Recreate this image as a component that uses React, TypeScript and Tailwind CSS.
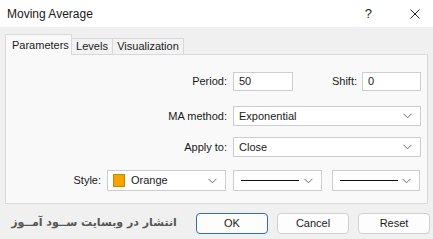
import React from 'react';

const font = { fontFamily: '"Liberation Sans", Arial, sans-serif' };

function Chevron() {
  return (
    <svg width="9" height="6" viewBox="0 0 9 6" className="shrink-0">
      <path d="M0.5 0.8 L4.5 4.8 L8.5 0.8" fill="none" stroke="#6b6b6b" strokeWidth="1" />
    </svg>
  );
}

function TextBox({ value, className = '' }: { value: string; className?: string }) {
  return (
    <div className={`h-[19px] bg-white border border-[#cdcdcd] flex items-center pl-[5px] text-[11px] text-[#1a1a1a] ${className}`}>
      {value}
    </div>
  );
}

function Select({ children, className = '' }: { children: React.ReactNode; className?: string }) {
  return (
    <div className={`bg-white border border-[#cdcdcd] flex items-center pl-[5px] pr-[8px] text-[11px] text-[#1a1a1a] ${className}`}>
      <div className="flex-1 flex items-center">{children}</div>
      <Chevron />
    </div>
  );
}

function Line() {
  return <div className="h-px bg-[#111] w-[58px]" />;
}

function Button({ label, primary = false }: { label: string; primary?: boolean }) {
  return (
    <div
      className={`w-[72px] h-[21px] rounded-[4px] flex items-center justify-center text-[11px] text-[#1a1a1a] ${
        primary ? 'border border-[#2a6fc0] bg-[#fdfdfd]' : 'border border-[#d0d0d0] bg-[#fdfdfd]'
      }`}
    >
      {label}
    </div>
  );
}

export default function App() {
  return (
    <div className="w-[433px] h-[239px] bg-[#f0f0f0] overflow-hidden" style={font}>
      {/* title bar */}
      <div className="h-[27px] bg-white flex items-center pl-[7px] text-[12px] text-[#1a1a1a]">
        <span>Moving Average</span>
        <span className="ml-auto mr-[38px] text-[13px] text-[#222]">?</span>
        <svg width="10" height="10" viewBox="0 0 10 10" className="mr-[13px]">
          <path d="M0.5 0.5 L9.5 9.5 M9.5 0.5 L0.5 9.5" stroke="#222" strokeWidth="1" />
        </svg>
      </div>

      {/* tabs */}
      <div className="mt-[7px] pl-[5px] h-[20px] flex items-end text-[11px] text-[#1a1a1a]">
        <div className="relative z-10 -mb-px h-[21px] w-[67px] bg-[#f9f9f9] border border-b-0 border-[#d9d9d9] flex items-center pl-[6px]">
          Parameters
        </div>
        <div className="h-[16px] w-[41px] bg-[#f3f3f3] border border-l-0 border-b-0 border-[#d9d9d9] flex items-center justify-center">
          Levels
        </div>
        <div className="h-[16px] w-[71px] bg-[#f3f3f3] border border-l-0 border-b-0 border-[#d9d9d9] flex items-center justify-center">
          Visualization
        </div>
      </div>

      {/* panel */}
      <div className="ml-[5px] w-[423px] h-[150px] border border-[#d9d9d9] bg-[#f9f9f9] text-[11px] text-[#1a1a1a]">
        <div className="mt-[17px] flex items-center h-[19px]">
          <div className="w-[221px] text-right">Period:</div>
          <TextBox value="50" className="ml-[6px] w-[60px]" />
          <div className="w-[64px] text-right">Shift:</div>
          <TextBox value="0" className="ml-[5px] w-[59px]" />
        </div>
        <div className="mt-[15px] flex items-center h-[20px]">
          <div className="w-[221px] text-right">MA method:</div>
          <Select className="ml-[6px] w-[188px] h-[20px]">Exponential</Select>
        </div>
        <div className="mt-[11px] flex items-center h-[20px]">
          <div className="w-[221px] text-right">Apply to:</div>
          <Select className="ml-[6px] w-[188px] h-[20px]">Close</Select>
        </div>
        <div className="mt-[13px] flex items-center h-[21px]">
          <div className="w-[95px] text-right">Style:</div>
          <Select className="ml-[6px] w-[119px] h-[21px] pl-[4px]">
            <span className="w-[12px] h-[13px] bg-[#f5a300] border border-[#c98600] mr-[6px]" />
            Orange
          </Select>
          <Select className="ml-[7px] w-[89px] h-[21px] pl-[7px]">
            <Line />
          </Select>
          <Select className="ml-[10px] w-[88px] h-[21px] pl-[7px]">
            <Line />
          </Select>
        </div>
      </div>

      {/* footer */}
      <div className="mt-[9px] flex items-center h-[21px]">
        <div
          dir="rtl"
          className="ml-[9px] w-[170px] whitespace-nowrap overflow-hidden text-center font-bold text-[11px] text-[#555]"
          style={{ fontFamily: '"DejaVu Sans", sans-serif' }}
        >
          انتشار در وبسایت ســود آمــوز
        </div>
        <div className="ml-[17px] flex gap-[9px]">
          <Button label="OK" primary />
          <Button label="Cancel" />
          <Button label="Reset" />
        </div>
      </div>
    </div>
  );
}
